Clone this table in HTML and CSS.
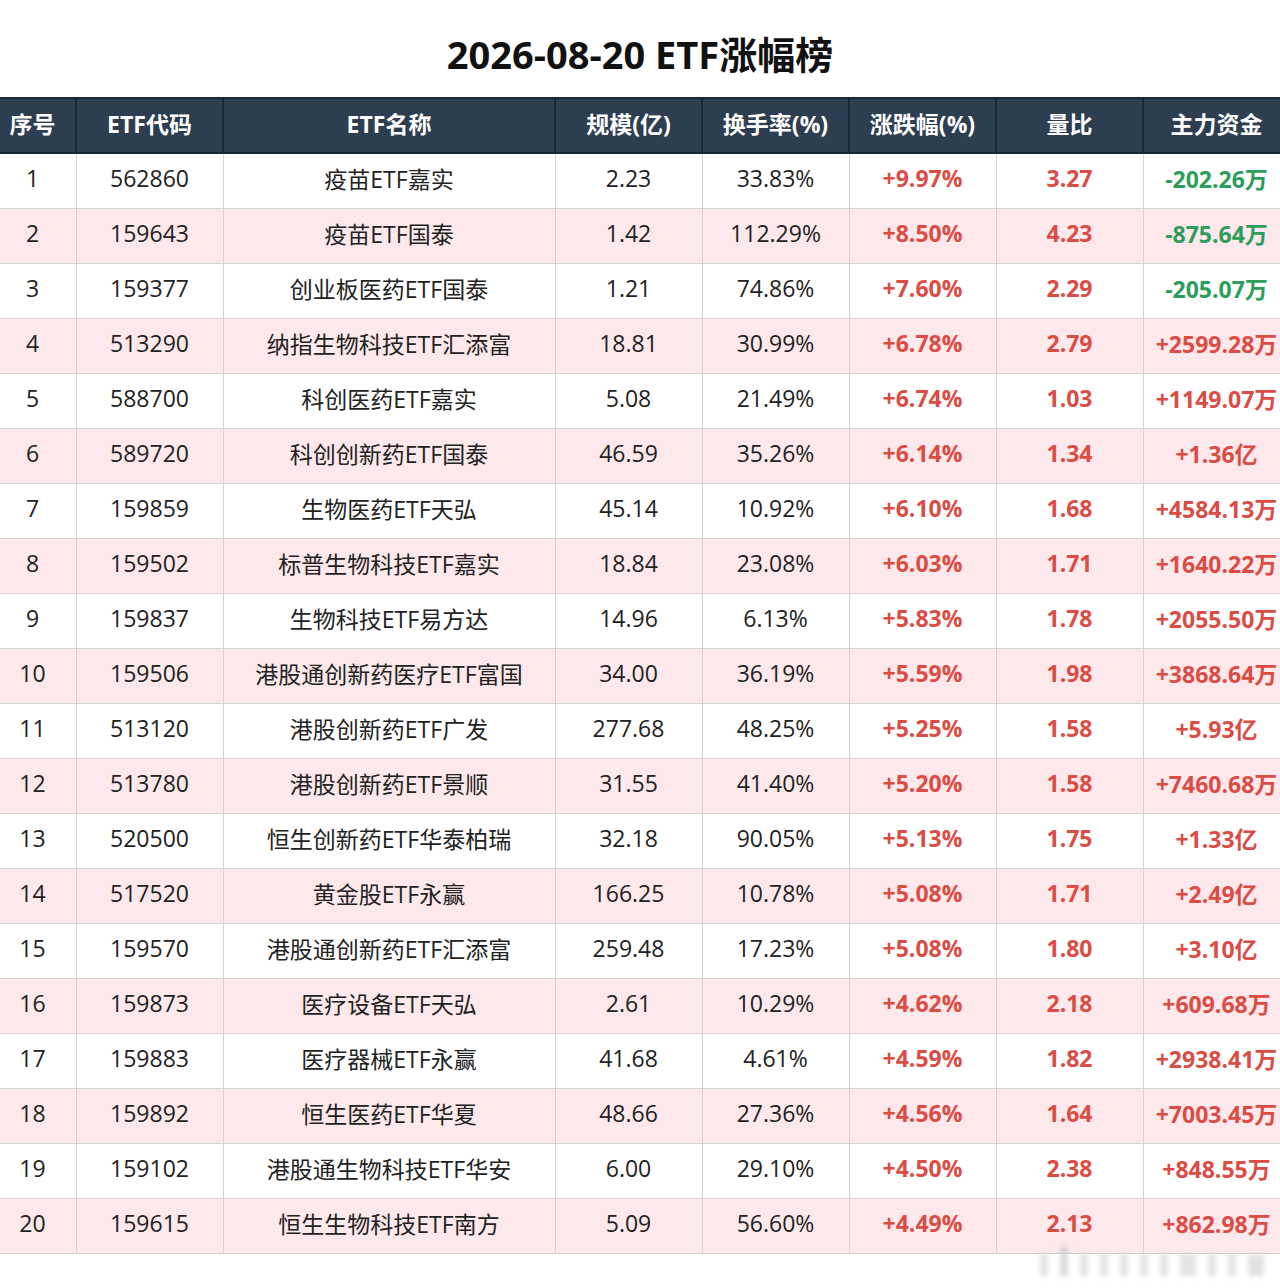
FILE: index.html
```html
<!DOCTYPE html>
<html lang="zh-CN">
<head>
<meta charset="utf-8">
<title>2026-08-20 ETF涨幅榜</title>
<link rel="stylesheet" href="styles.css">
</head>
<body>
<div class="page">
  <h1 class="title">2026-08-20 ETF涨幅榜</h1>
  <table class="rank">
    <colgroup>
      <col class="c-idx"><col class="c-code"><col class="c-name"><col class="c-n"><col class="c-n"><col class="c-n"><col class="c-n"><col class="c-n">
    </colgroup>
    <thead>
      <tr><th>序号</th><th>ETF代码</th><th>ETF名称</th><th>规模(亿)</th><th>换手率(%)</th><th>涨跌幅(%)</th><th>量比</th><th>主力资金</th></tr>
    </thead>
    <tbody>
      <tr><td>1</td><td>562860</td><td>疫苗ETF嘉实</td><td>2.23</td><td>33.83%</td><td class="up">+9.97%</td><td class="up">3.27</td><td class="down">-202.26万</td></tr>
      <tr><td>2</td><td>159643</td><td>疫苗ETF国泰</td><td>1.42</td><td>112.29%</td><td class="up">+8.50%</td><td class="up">4.23</td><td class="down">-875.64万</td></tr>
      <tr><td>3</td><td>159377</td><td>创业板医药ETF国泰</td><td>1.21</td><td>74.86%</td><td class="up">+7.60%</td><td class="up">2.29</td><td class="down">-205.07万</td></tr>
      <tr><td>4</td><td>513290</td><td>纳指生物科技ETF汇添富</td><td>18.81</td><td>30.99%</td><td class="up">+6.78%</td><td class="up">2.79</td><td class="up">+2599.28万</td></tr>
      <tr><td>5</td><td>588700</td><td>科创医药ETF嘉实</td><td>5.08</td><td>21.49%</td><td class="up">+6.74%</td><td class="up">1.03</td><td class="up">+1149.07万</td></tr>
      <tr><td>6</td><td>589720</td><td>科创创新药ETF国泰</td><td>46.59</td><td>35.26%</td><td class="up">+6.14%</td><td class="up">1.34</td><td class="up">+1.36亿</td></tr>
      <tr><td>7</td><td>159859</td><td>生物医药ETF天弘</td><td>45.14</td><td>10.92%</td><td class="up">+6.10%</td><td class="up">1.68</td><td class="up">+4584.13万</td></tr>
      <tr><td>8</td><td>159502</td><td>标普生物科技ETF嘉实</td><td>18.84</td><td>23.08%</td><td class="up">+6.03%</td><td class="up">1.71</td><td class="up">+1640.22万</td></tr>
      <tr><td>9</td><td>159837</td><td>生物科技ETF易方达</td><td>14.96</td><td>6.13%</td><td class="up">+5.83%</td><td class="up">1.78</td><td class="up">+2055.50万</td></tr>
      <tr><td>10</td><td>159506</td><td>港股通创新药医疗ETF富国</td><td>34.00</td><td>36.19%</td><td class="up">+5.59%</td><td class="up">1.98</td><td class="up">+3868.64万</td></tr>
      <tr><td>11</td><td>513120</td><td>港股创新药ETF广发</td><td>277.68</td><td>48.25%</td><td class="up">+5.25%</td><td class="up">1.58</td><td class="up">+5.93亿</td></tr>
      <tr><td>12</td><td>513780</td><td>港股创新药ETF景顺</td><td>31.55</td><td>41.40%</td><td class="up">+5.20%</td><td class="up">1.58</td><td class="up">+7460.68万</td></tr>
      <tr><td>13</td><td>520500</td><td>恒生创新药ETF华泰柏瑞</td><td>32.18</td><td>90.05%</td><td class="up">+5.13%</td><td class="up">1.75</td><td class="up">+1.33亿</td></tr>
      <tr><td>14</td><td>517520</td><td>黄金股ETF永赢</td><td>166.25</td><td>10.78%</td><td class="up">+5.08%</td><td class="up">1.71</td><td class="up">+2.49亿</td></tr>
      <tr><td>15</td><td>159570</td><td>港股通创新药ETF汇添富</td><td>259.48</td><td>17.23%</td><td class="up">+5.08%</td><td class="up">1.80</td><td class="up">+3.10亿</td></tr>
      <tr><td>16</td><td>159873</td><td>医疗设备ETF天弘</td><td>2.61</td><td>10.29%</td><td class="up">+4.62%</td><td class="up">2.18</td><td class="up">+609.68万</td></tr>
      <tr><td>17</td><td>159883</td><td>医疗器械ETF永赢</td><td>41.68</td><td>4.61%</td><td class="up">+4.59%</td><td class="up">1.82</td><td class="up">+2938.41万</td></tr>
      <tr><td>18</td><td>159892</td><td>恒生医药ETF华夏</td><td>48.66</td><td>27.36%</td><td class="up">+4.56%</td><td class="up">1.64</td><td class="up">+7003.45万</td></tr>
      <tr><td>19</td><td>159102</td><td>港股通生物科技ETF华安</td><td>6.00</td><td>29.10%</td><td class="up">+4.50%</td><td class="up">2.38</td><td class="up">+848.55万</td></tr>
      <tr><td>20</td><td>159615</td><td>恒生生物科技ETF南方</td><td>5.09</td><td>56.60%</td><td class="up">+4.49%</td><td class="up">2.13</td><td class="up">+862.98万</td></tr>
    </tbody>
  </table>
  <div class="mark" aria-hidden="true"><span></span><span class="tall"></span><span></span><span></span><span></span><span></span><span></span><span class="wide"></span><span></span><span></span><span class="wide"></span></div>
</div>
</body>
</html>
```
FILE: styles.css
```css
html, body {
  margin: 0;
  padding: 0;
  background: #ffffff;
  overflow: hidden;
}
body {
  width: 1280px;
  height: 1288px;
  font-family: "Open Sans", "Noto Sans CJK SC", sans-serif;
  color: #222;
}
.page {
  position: relative;
  width: 1280px;
  height: 1288px;
  overflow: hidden;
}
.title {
  box-sizing: border-box;
  height: 97px;
  margin: 0;
  padding-top: 32px;
  font-size: 38px;
  line-height: 44px;
  font-weight: 700;
  text-align: center;
  color: #111;
}
.rank {
  margin-left: -12px;
  width: 1302px;
  border-collapse: collapse;
  table-layout: fixed;
  font-size: 23px;
}
.c-idx { width: 87px; }
.c-code { width: 147px; }
.c-name { width: 332px; }
.c-n { width: 147px; }
.rank th {
  height: 55px;
  box-sizing: border-box;
  padding: 0 0 6px;
  background: #2c3e50;
  color: #ffffff;
  font-weight: 700;
  border: 2px solid #1b2633;
  white-space: nowrap;
}
.rank td {
  height: 55px;
  box-sizing: border-box;
  padding: 0 0 6px;
  text-align: center;
  border: 1px solid #d2d2d2;
  white-space: nowrap;
  color: #222;
}
.rank tbody tr:nth-child(even) td {
  background: #fde8eb;
}
.rank td.up {
  color: #db4c45;
  font-weight: 700;
}
.rank td.down {
  color: #2b9e5c;
  font-weight: 700;
}
.mark {
  position: absolute;
  left: 1040px;
  top: 1246px;
  display: flex;
  gap: 12px;
  align-items: flex-end;
  filter: blur(2px);
  opacity: 0.5;
}
.mark span {
  display: block;
  width: 8px;
  height: 22px;
  background: #c8c8c8;
}
.mark span.tall {
  height: 30px;
  background: #bdbdbd;
}
.mark span.wide {
  width: 16px;
}
```
